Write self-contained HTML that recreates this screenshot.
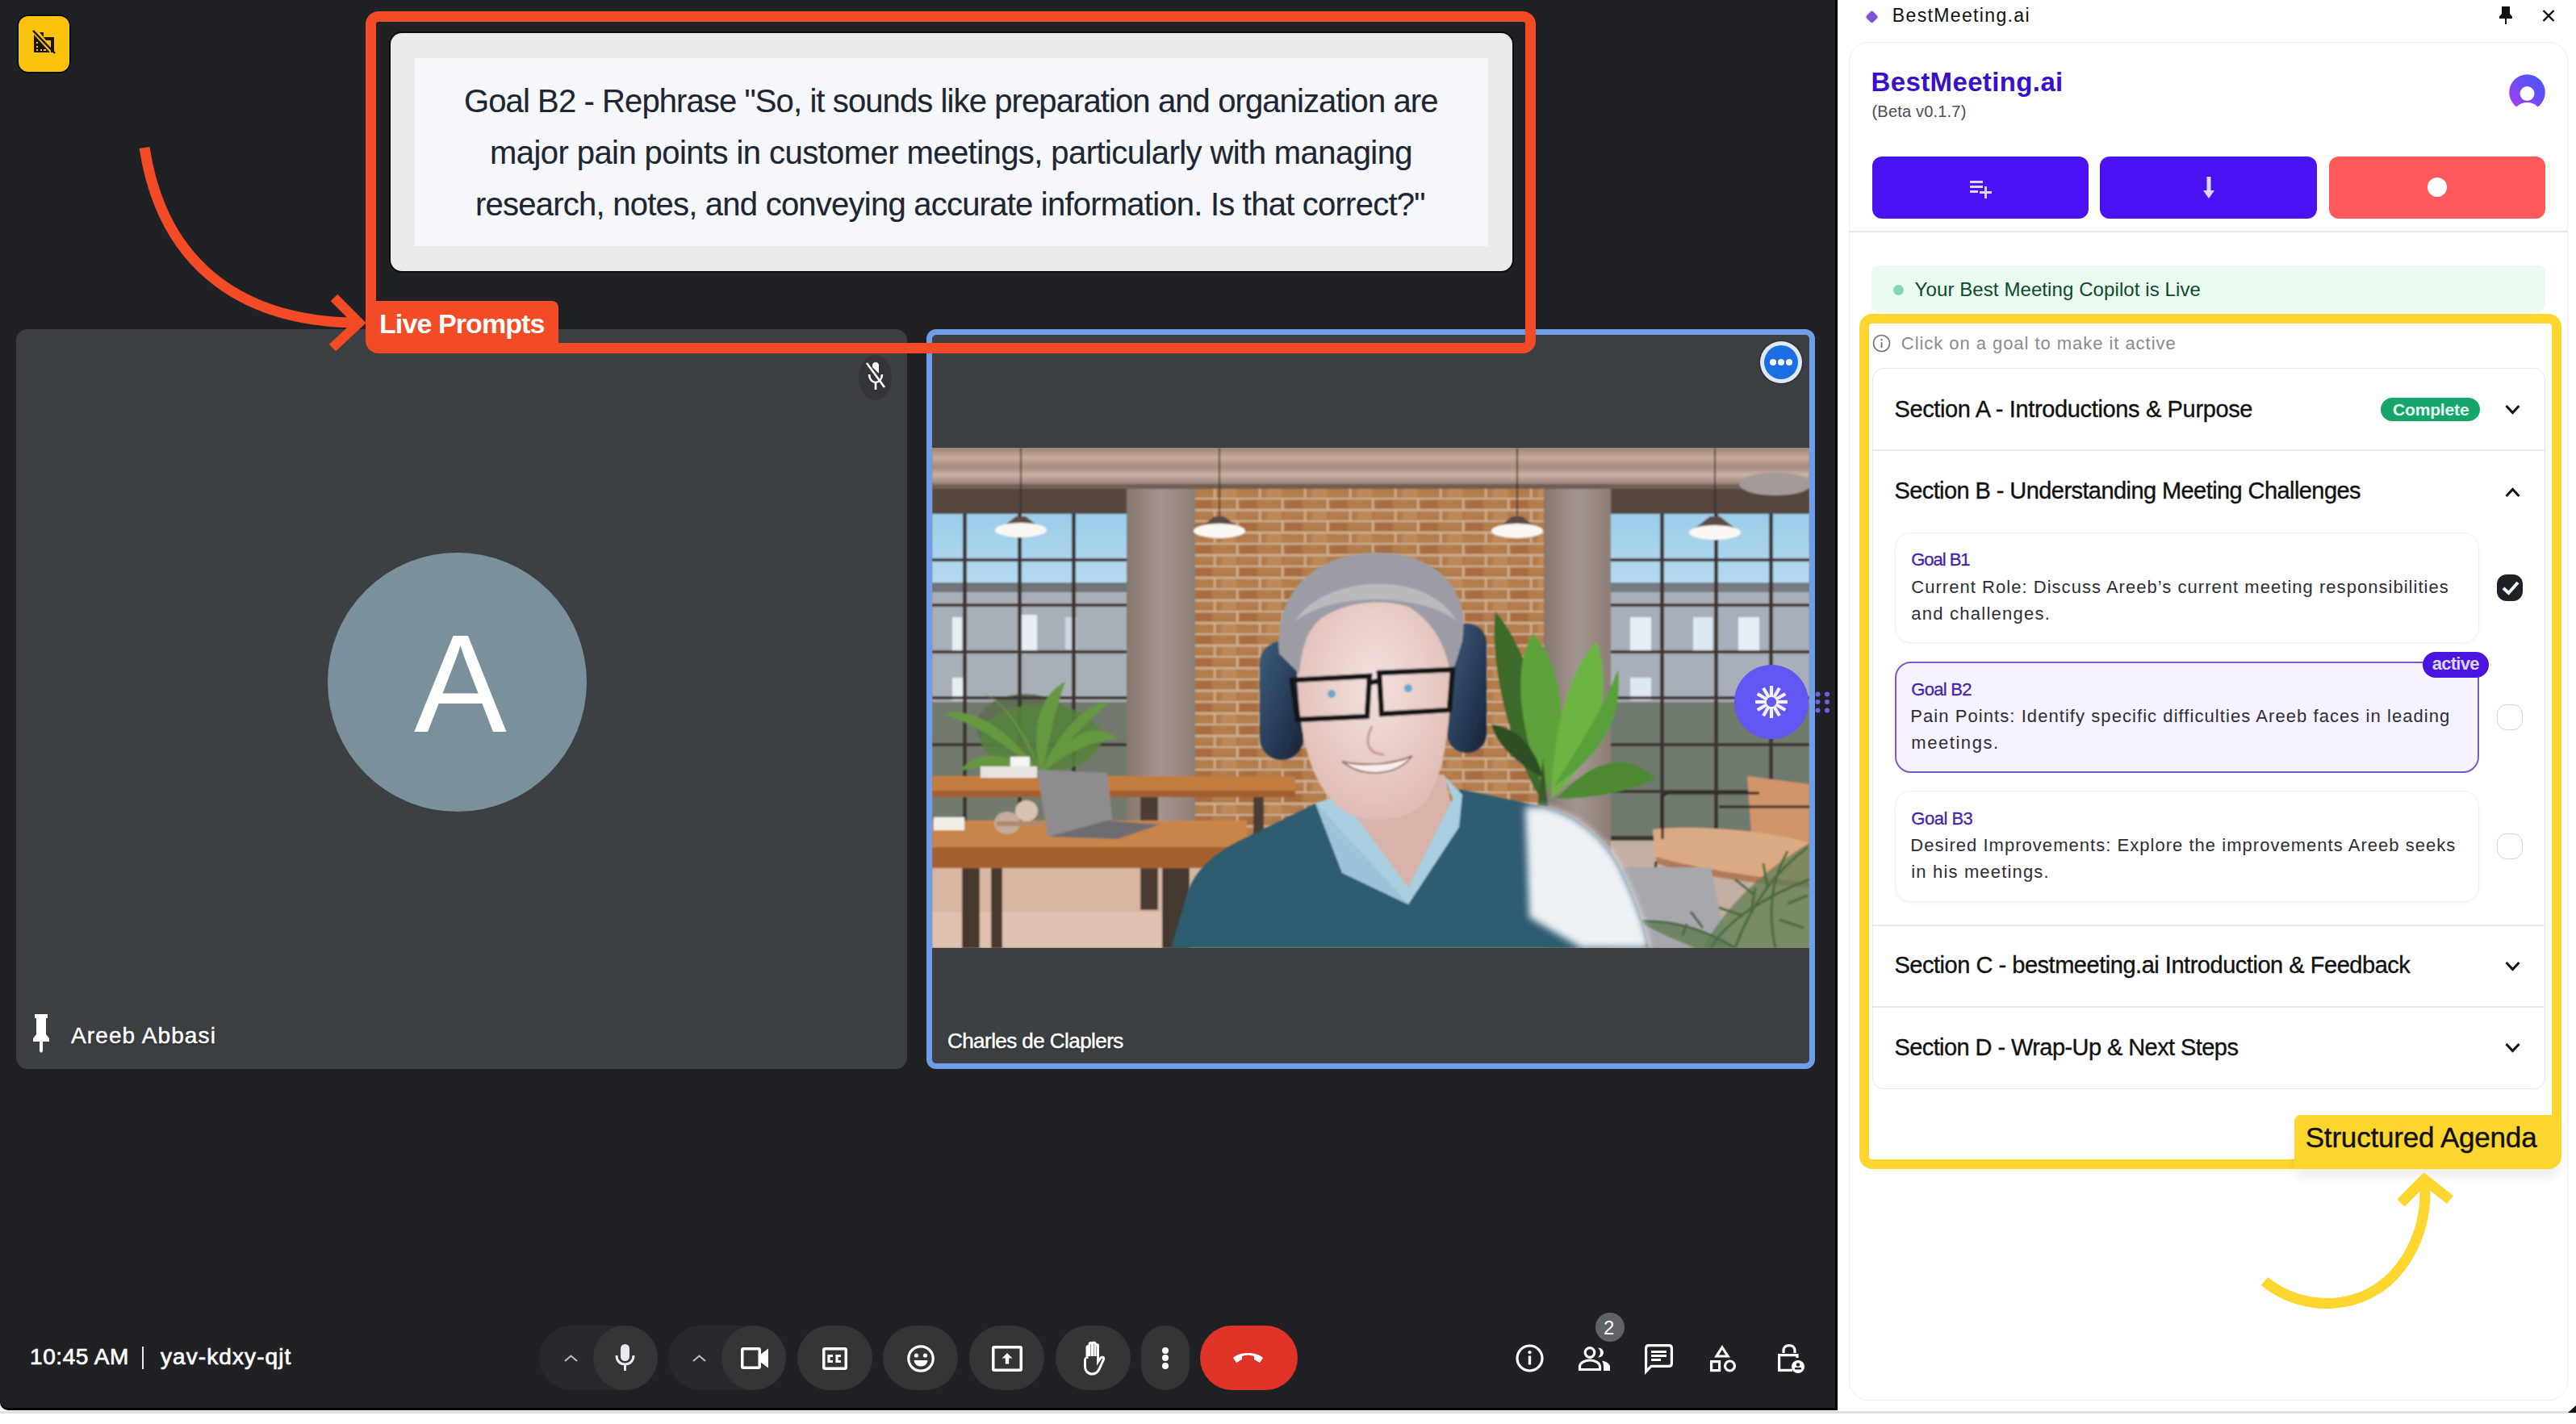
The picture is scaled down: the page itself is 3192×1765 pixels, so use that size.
<!DOCTYPE html>
<html><head><meta charset="utf-8">
<style>
*{box-sizing:border-box;margin:0;padding:0}
html,body{width:3192px;height:1765px;overflow:hidden;background:#fff;font-family:"Liberation Sans",sans-serif}
.a{position:absolute}
.t{position:absolute;white-space:nowrap;line-height:1}
svg{position:absolute;overflow:visible}
.ctl{position:absolute;background:#333537;border-radius:40px;height:80px;top:1643px}
.wt{color:#fff;text-shadow:0 1px 2px rgba(0,0,0,.5)}
</style></head><body>
<div class="a" style="left:0;top:1749px;width:3192px;height:3px;background:#dedfe1"></div>
<div class="a" style="left:0;top:0;width:2277px;height:1748px;background:#000;border-bottom-left-radius:10px"></div>
<div class="a" style="left:0;top:0;width:2274px;height:1745px;background:#202124;border-bottom-left-radius:10px;overflow:hidden">
  <!-- yellow icon -->
  <div class="a" style="left:23px;top:20px;width:63px;height:69px;background:#f8c20d;border-radius:12px;box-shadow:0 0 0 1.5px #000"></div>
  <svg style="left:40px;top:37px" width="29" height="30" viewBox="0 0 29 30">
    <path d="M2 6 L2 28 L22 28 Z" fill="#1a1406"/>
    <path d="M9 3 L14 3 L14 9 L27 9 L27 28 L23 28 L23 13 L17 13 Z" fill="#1a1406"/>
    <line x1="1" y1="1" x2="28" y2="29" stroke="#1a1406" stroke-width="2.5"/>
    <rect x="5" y="15" width="2" height="2" fill="#f8c20d"/><rect x="5" y="20" width="2" height="2" fill="#f8c20d"/><rect x="5" y="24" width="2" height="2" fill="#f8c20d"/><rect x="10" y="24" width="2" height="2" fill="#f8c20d"/><rect x="14" y="24" width="3" height="2" fill="#f8c20d"/>
  </svg>

  <!-- Areeb tile -->
  <div class="a" style="left:20px;top:408px;width:1104px;height:917px;background:#3c4043;border-radius:14px"></div>
  <div class="a" style="left:406px;top:685px;width:321px;height:321px;border-radius:50%;background:#7a909c"></div>
  <div class="t" style="left:513.0px;top:761.4px;font-size:172px;letter-spacing:0.0px;color:#fff">A</div>
  <div class="a" style="left:1064px;top:440px;width:41px;height:56px;border-radius:50%;background:#333538"></div>
  <svg style="left:1072px;top:447px" width="26" height="38" viewBox="0 0 26 38">
    <path d="M13 2 C16 2 17 4 17 6 L17 16 L9 8 L9 6 C9 4 10 2 13 2 Z" fill="#fff"/>
    <path d="M5 17 C5 23 9 27 13 27 C17 27 21 23 21 17" fill="none" stroke="#fff" stroke-width="2.6"/>
    <rect x="11.7" y="26" width="2.6" height="10" fill="#fff"/>
    <line x1="2" y1="3" x2="24" y2="33" stroke="#fff" stroke-width="2.6"/>
  </svg>
  <svg style="left:40px;top:1256px" width="22" height="48" viewBox="0 0 22 48">
    <path d="M3 1 H19 V6 H17 V26 L21 31 V35 H13 V47 L11 49 L9 47 V35 H1 V31 L5 26 V6 H3 Z" fill="#fff"/>
  </svg>
  <div class="t" style="left:88.0px;top:1270.1px;font-size:28px;letter-spacing:1.118px;color:#fff;-webkit-text-stroke:0.5px #fff;text-shadow:0 1px 3px rgba(0,0,0,.6)">Areeb Abbasi</div>

  <!-- Charles tile -->
  <div class="a" style="left:1148px;top:408px;width:1101px;height:917px;border:7px solid #6f9de8;border-radius:12px;background:#3c4043"></div>
  <div class="a" id="photo" style="left:1155px;top:555px;width:1087px;height:620px;background:#a08070;overflow:hidden">
<svg style="left:0;top:0" width="1087" height="620" viewBox="1155 555 1087 620">
<defs>
  <pattern id="brick" x="0" y="3" width="56" height="28" patternUnits="userSpaceOnUse">
    <rect width="56" height="28" fill="#b47b4c"/>
    <rect x="0" y="12" width="56" height="2.5" fill="#cdb49a"/>
    <rect x="0" y="26" width="56" height="2.5" fill="#cdb49a"/>
    <rect x="20" y="0" width="2.5" height="13" fill="#cdb49a"/>
    <rect x="48" y="14" width="2.5" height="13" fill="#cdb49a"/>
    <rect x="24" y="1" width="22" height="10" fill="#a86c40"/>
    <rect x="2" y="15" width="18" height="10" fill="#c08a58"/>
  </pattern>
  <linearGradient id="sky" x1="0" y1="0" x2="0" y2="1"><stop offset="0" stop-color="#9ccdea"/><stop offset="1" stop-color="#b6daee"/></linearGradient>
  <linearGradient id="pipe" x1="0" y1="0" x2="0" y2="1"><stop offset="0" stop-color="#9b8478"/><stop offset=".25" stop-color="#c9ab9c"/><stop offset=".5" stop-color="#a48c80"/><stop offset=".7" stop-color="#cdb2a4"/><stop offset="1" stop-color="#8c766c"/></linearGradient>
  <linearGradient id="col" x1="0" y1="0" x2="1" y2="0"><stop offset="0" stop-color="#85766e"/><stop offset=".5" stop-color="#a39690"/><stop offset="1" stop-color="#8c7d75"/></linearGradient>
  <linearGradient id="hp" x1="0" y1="0" x2="1" y2="1"><stop offset="0" stop-color="#3d5c7e"/><stop offset="1" stop-color="#172338"/></linearGradient>
  <radialGradient id="skin" cx=".5" cy=".4" r=".6"><stop offset="0" stop-color="#f3e0dd"/><stop offset="1" stop-color="#e0bdb6"/></radialGradient>
  <filter id="soft"><feGaussianBlur stdDeviation="1.2"/></filter>
  <filter id="soft3"><feGaussianBlur stdDeviation="4"/></filter>
</defs>
<g filter="url(#soft)">
  <!-- base -->
  <rect x="1155" y="555" width="1087" height="620" fill="#a98a78"/>
  <!-- brick wall -->
  <rect x="1481" y="600" width="432" height="480" fill="url(#brick)"/>
  <!-- left window -->
  <rect x="1155" y="597" width="241" height="40" fill="#54463e"/>
  <rect x="1155" y="637" width="241" height="90" fill="url(#sky)"/>
  <rect x="1155" y="725" width="241" height="145" fill="#a9afb7"/>
  <rect x="1155" y="722" width="241" height="12" fill="#6f747c"/>
  <rect x="1155" y="870" width="241" height="150" fill="#717a6c"/>
  <rect x="1180" y="765" width="12" height="45" fill="#e8eef4"/><rect x="1263" y="762" width="22" height="46" fill="#e8eef4"/><rect x="1320" y="765" width="14" height="40" fill="#cdd8e2"/>
  <rect x="1180" y="840" width="14" height="28" fill="#e8eef4"/>
  <ellipse cx="1270" cy="900" rx="60" ry="40" fill="#5e6e55"/>
  <g fill="#3d3430">
    <rect x="1193" y="637" width="5" height="385"/><rect x="1261" y="637" width="5" height="385"/><rect x="1328" y="637" width="5" height="385"/>
    <rect x="1155" y="692" width="241" height="4"/><rect x="1155" y="748" width="241" height="4"/><rect x="1155" y="806" width="241" height="4"/><rect x="1155" y="863" width="241" height="4"/><rect x="1155" y="921" width="241" height="4"/>
  </g>
  <!-- right window -->
  <rect x="1996" y="605" width="246" height="32" fill="#54463e"/>
  <rect x="1996" y="637" width="246" height="90" fill="url(#sky)"/>
  <rect x="1996" y="725" width="246" height="145" fill="#a9afb8"/>
  <rect x="1996" y="722" width="246" height="12" fill="#747a82"/>
  <rect x="1996" y="870" width="246" height="175" fill="#707a6e"/>
  <rect x="2020" y="765" width="26" height="42" fill="#e6eef6"/><rect x="2098" y="765" width="24" height="42" fill="#dde8f2"/><rect x="2154" y="765" width="26" height="42" fill="#e6eef6"/>
  <rect x="2020" y="840" width="26" height="28" fill="#dde8f2"/>
  <rect x="1996" y="1040" width="246" height="135" fill="#c3aea2"/>
  <g fill="#3d3430">
    <rect x="2057" y="637" width="5" height="405"/><rect x="2124" y="637" width="5" height="405"/><rect x="2192" y="637" width="5" height="405"/>
    <rect x="1996" y="692" width="246" height="4"/><rect x="1996" y="748" width="246" height="4"/><rect x="1996" y="806" width="246" height="4"/><rect x="1996" y="863" width="246" height="4"/><rect x="1996" y="921" width="246" height="4"/><rect x="1996" y="979" width="246" height="4"/><rect x="1996" y="1036" width="246" height="6"/>
  </g>
  <!-- columns -->
  <rect x="1396" y="597" width="85" height="480" fill="url(#col)"/>
  <rect x="1913" y="605" width="83" height="440" fill="url(#col)"/>
  <rect x="1913" y="1040" width="83" height="30" fill="#9a8a80"/>
  <!-- ceiling pipes -->
  <rect x="1155" y="555" width="1087" height="48" fill="url(#pipe)"/>
  <rect x="1155" y="600" width="1087" height="6" fill="#6f5e55"/>
  <ellipse cx="2200" cy="600" rx="45" ry="14" fill="#a49a98"/>
  <!-- lamp cords -->
  <g stroke="#2e2826" stroke-width="1.5"><line x1="1265" y1="555" x2="1265" y2="648"/><line x1="1511" y1="555" x2="1511" y2="648"/><line x1="1880" y1="555" x2="1880" y2="648"/><line x1="2125" y1="555" x2="2125" y2="648"/></g>
  <g fill="#5a4c45"><path d="M1259 640 L1271 640 L1290 655 L1240 655 Z"/><path d="M1505 640 L1517 640 L1536 655 L1486 655 Z"/><path d="M1874 640 L1886 640 L1905 655 L1855 655 Z"/><path d="M2119 640 L2131 640 L2150 655 L2100 655 Z"/></g>
  <g fill="#fbf8f4"><ellipse cx="1265" cy="657" rx="32" ry="9"/><ellipse cx="1511" cy="658" rx="32" ry="9"/><ellipse cx="1880" cy="658" rx="32" ry="9"/><ellipse cx="2125" cy="660" rx="32" ry="9"/></g>
  <!-- floor -->
  <rect x="1155" y="1076" width="760" height="99" fill="#d7b6a3"/>
  <rect x="1155" y="1130" width="300" height="45" fill="#dfc1b0"/>
  <!-- palm left -->
  <ellipse cx="1290" cy="915" rx="75" ry="42" fill="#58843c" opacity=".85"/>
  <g fill="#66983f">
    <path d="M1290 960 C1250 900 1200 875 1170 885 C1215 900 1255 930 1290 960 Z"/>
    <path d="M1290 960 C1275 900 1290 860 1320 845 C1305 885 1300 925 1290 960 Z"/>
    <path d="M1290 960 C1325 905 1355 895 1385 915 C1350 920 1315 935 1290 960 Z"/>
    <path d="M1290 960 C1245 930 1210 930 1190 955 C1230 948 1260 950 1290 960 Z"/>
    <path d="M1290 960 C1305 915 1345 870 1375 870 C1345 895 1318 925 1290 960 Z"/>
    <path d="M1290 960 C1265 905 1245 870 1215 858 C1250 870 1275 915 1290 960 Z"/>
  </g>
  <rect x="1252" y="938" width="24" height="22" fill="#f4f4f2"/>
  <!-- back table -->
  <rect x="1155" y="962" width="450" height="25" fill="#c27b40"/>
  <rect x="1155" y="980" width="450" height="8" fill="#a35f2d"/>
  <rect x="1413" y="988" width="22" height="140" fill="#4c3d35"/><rect x="1553" y="988" width="13" height="55" fill="#4c3d35"/>
  <rect x="1215" y="950" width="70" height="14" fill="#e9e4df"/>
  <!-- front table -->
  <rect x="1155" y="1017" width="390" height="42" fill="#c8844a"/>
  <rect x="1155" y="1050" width="390" height="26" fill="#a6612f"/>
  <g fill="#45372f"><rect x="1192" y="1076" width="22" height="99"/><rect x="1228" y="1076" width="14" height="99"/><rect x="1440" y="1076" width="34" height="99"/></g>
  <rect x="1157" y="1013" width="38" height="16" fill="#f2efe9"/>
  <!-- laptop -->
  <path d="M1285 954 L1372 958 L1380 1030 L1298 1037 Z" fill="#8e8b8f"/>
  <path d="M1372 1017 L1437 1022 L1385 1040 L1300 1037 Z" fill="#6f6d72"/>
  <ellipse cx="1248" cy="1020" rx="16" ry="14" fill="#c4ab9b"/><ellipse cx="1272" cy="1005" rx="14" ry="13" fill="#d8c2b1"/>
  <rect x="1235" y="1018" width="55" height="6" fill="#b08a70"/>
  <!-- right plant -->
  <g>
    <path d="M1912 995 C1870 930 1845 820 1853 758 C1890 800 1925 900 1912 995 Z" fill="#3c6a2c"/>
    <path d="M1915 985 C1880 900 1875 820 1900 785 C1940 830 1945 920 1915 985 Z" fill="#5da23a"/>
    <path d="M1922 990 C1925 900 1945 830 1978 795 C2000 860 1980 940 1922 990 Z" fill="#6cb443"/>
    <path d="M1925 975 C1960 920 1985 880 2005 830 C2010 880 1995 930 1925 975 Z" fill="#58a03a"/>
    <path d="M1912 965 C1880 945 1855 925 1848 898 C1880 900 1905 930 1912 965 Z" fill="#2e4f26"/>
    <path d="M1928 990 C1965 950 2010 925 2052 965 C2010 985 1965 990 1928 990 Z" fill="#4d8a33"/>
    <path d="M1905 1000 L1912 940 L1918 1000 Z" fill="#3a5a2a"/>
  </g>
  <!-- armchair -->
  <path d="M2165 962 L2242 972 L2242 1070 L2172 1062 Z" fill="#d2946a"/>
  <path d="M2048 1028 C2100 1022 2200 1030 2242 1045 L2242 1098 C2180 1092 2100 1082 2052 1068 Z" fill="#dcaa82"/>
  <path d="M2052 1062 C2100 1076 2180 1088 2242 1094 L2242 1100 C2180 1096 2100 1086 2052 1070 Z" fill="#b07a58"/>
  <g stroke="#2c2624" stroke-width="3" fill="none"><path d="M2060 1040 L2060 990 C2060 985 2065 983 2070 983 L2180 983"/><path d="M2052 1068 L2049 1100"/><path d="M2130 1000 L2242 1000"/></g>
  <path d="M2010 1075 L2120 1075 L2140 1175 L2005 1175 Z" fill="#a9a7ae"/>
  <path d="M2242 1045 C2190 1075 2140 1120 2110 1175 L2242 1175 Z" fill="#5f7d52" opacity=".75"/>
  <path d="M2150 1175 C2110 1150 2070 1138 2030 1142 C2060 1160 2090 1170 2100 1175 Z" fill="#5f7d52" opacity=".8"/>
  <g stroke="#4b6b40" stroke-width="3" fill="none">
    <path d="M2240 1050 C2200 1080 2170 1120 2150 1175"/>
    <path d="M2242 1090 C2190 1110 2140 1140 2120 1175"/>
    <path d="M2200 1175 C2190 1130 2195 1090 2215 1055"/>
    <path d="M2150 1175 C2110 1150 2070 1140 2030 1142"/>
    <path d="M2175 1110 L2150 1090 M2190 1100 L2185 1070 M2160 1135 L2130 1125 M2170 1130 L2175 1100 M2110 1150 L2095 1130 M2090 1145 L2085 1160 M2215 1120 L2240 1110 M2205 1140 L2235 1150"/>
  </g>
</g>
<!-- man -->
<g filter="url(#soft)">
  <!-- sweater -->
  <path d="M1451 1175 L1470 1110 C1480 1080 1500 1060 1540 1040 L1630 996 L1745 1121 L1808 978 L1913 1000 C1950 1008 1985 1035 2005 1070 C2025 1110 2040 1150 2043 1175 Z" fill="#2e5b70"/>
  <!-- highlight -->
  <path d="M1890 1000 L1913 1000 C1950 1008 1985 1035 2005 1070 C2025 1110 2040 1150 2043 1175 L1960 1175 L1895 1137 Z" fill="#eef2f6" filter="url(#soft3)"/>
  <!-- neck -->
  <path d="M1645 960 L1790 960 L1800 1005 L1745 1100 L1655 1030 Z" fill="#d9b3a9"/>
  <!-- collar -->
  <path d="M1630 996 L1660 985 L1745 1100 L1800 990 L1790 962 L1812 985 L1808 1025 L1745 1121 Z" fill="#a9cfe0"/>
  <path d="M1630 996 L1663 1082 L1745 1121 Z" fill="#9cc4d8"/>
  <!-- headphone cups -->
  <rect x="1561" y="795" width="54" height="147" rx="27" fill="url(#hp)"/>
  <rect x="1793" y="773" width="49" height="160" rx="24" fill="url(#hp)"/>
  <!-- face -->
  <path d="M1608 850 C1603 790 1640 742 1705 740 C1770 738 1802 788 1798 850 C1795 920 1786 975 1760 1000 C1740 1018 1690 1022 1665 1005 C1630 980 1612 930 1608 850 Z" fill="url(#skin)"/>
  <!-- hair -->
  <path d="M1585 810 C1578 725 1640 685 1705 685 C1785 685 1822 735 1812 795 L1798 840 C1793 800 1775 770 1745 752 C1705 740 1660 748 1632 770 C1618 785 1612 810 1610 835 Z" fill="#9d9da5"/>
  <path d="M1605 770 C1640 712 1770 705 1805 770 C1770 738 1655 730 1605 770 Z" fill="#b9b9c0"/>
  <!-- glasses -->
  <g fill="none" stroke="#141212" stroke-width="6.5">
    <path d="M1601 843 L1697 838 L1694 888 L1608 892 Z"/>
    <path d="M1709 834 L1800 830 L1796 880 L1712 885 Z"/>
    <line x1="1697" y1="846" x2="1709" y2="844"/>
  </g>
  <circle cx="1650" cy="860" r="5" fill="#6aa6d0"/><circle cx="1745" cy="853" r="5" fill="#6aa6d0"/>
  <!-- nose shadow, mouth -->
  <path d="M1700 900 C1690 920 1695 935 1715 935" fill="none" stroke="#c89a92" stroke-width="3"/>
  <path d="M1663 944 C1690 965 1730 962 1750 937 C1725 948 1690 950 1663 944 Z" fill="#f6eeea" stroke="#9a6b66" stroke-width="2"/>
</g>
</svg>

  </div>
  <div class="t" style="left:1174.0px;top:1277.0px;font-size:26px;letter-spacing:-0.556px;color:#fff;-webkit-text-stroke:0.5px #fff;text-shadow:0 1px 3px rgba(0,0,0,.6)">Charles de Claplers</div>
  <div class="a" style="left:2181px;top:423px;width:52px;height:52px;border-radius:50%;background:#dfe9fb;box-shadow:0 0 3px rgba(0,0,0,.6)"></div>
  <div class="a" style="left:2186px;top:428px;width:42px;height:42px;border-radius:50%;background:#1c6fe3"></div>
  <div class="a" style="left:2193px;top:445px;width:8px;height:8px;border-radius:50%;background:#fff"></div>
  <div class="a" style="left:2203px;top:445px;width:8px;height:8px;border-radius:50%;background:#fff"></div>
  <div class="a" style="left:2213px;top:445px;width:8px;height:8px;border-radius:50%;background:#fff"></div>

  <!-- floating bestmeeting button -->
  <div class="a" style="left:2149px;top:824px;width:92px;height:92px;border-radius:50%;background:#6257f3"></div>
  <svg style="left:2175px;top:850px" width="40" height="40" viewBox="-20 -20 40 40">
    <g stroke="#f4f2ff" stroke-width="4.2" stroke-linecap="butt">
      <line x1="0" y1="-20" x2="0" y2="-6"/><line x1="0" y1="20" x2="0" y2="6"/>
      <line x1="-20" y1="0" x2="-6" y2="0"/><line x1="20" y1="0" x2="6" y2="0"/>
      <line x1="10" y1="-17.3" x2="3" y2="-5.2"/><line x1="-10" y1="17.3" x2="-3" y2="5.2"/>
      <line x1="-10" y1="-17.3" x2="-3" y2="-5.2"/><line x1="10" y1="17.3" x2="3" y2="5.2"/>
      <line x1="17.3" y1="-10" x2="5.2" y2="-3"/><line x1="-17.3" y1="10" x2="-5.2" y2="3"/>
      <line x1="-17.3" y1="-10" x2="-5.2" y2="-3"/><line x1="17.3" y1="10" x2="5.2" y2="3"/>
    </g>
  </svg>
  <svg style="left:2249px;top:857px" width="20" height="28" viewBox="0 0 20 28">
    <g fill="#6e60e0"><circle cx="3.5" cy="3.5" r="3"/><circle cx="15" cy="3.5" r="3"/><circle cx="3.5" cy="13" r="3"/><circle cx="15" cy="13" r="3"/><circle cx="3.5" cy="23.5" r="3"/><circle cx="15" cy="23.5" r="3"/></g>
  </svg>

  <!-- live prompts overlay -->
  <div class="a" style="left:453px;top:14px;width:1450px;height:424px;border:13px solid #f24b25;border-radius:16px"></div>
  <div class="a" style="left:482px;top:39px;width:1394px;height:299px;background:#0c0c0e;border-radius:16px"></div>
  <div class="a" style="left:484px;top:41px;width:1390px;height:295px;background:#ebebeb;border-radius:14px"></div>
  <div class="a" style="left:514px;top:72px;width:1330px;height:233px;background:#f6f7fa"></div>
  <div class="t" style="left:575.0px;top:105.3px;font-size:40px;letter-spacing:-0.9px;color:#1f2633;-webkit-text-stroke:0.15px #1f2633">Goal B2 - Rephrase "So, it sounds like preparation and organization are</div>
  <div class="t" style="left:607.0px;top:168.5px;font-size:40px;letter-spacing:-0.569px;color:#1f2633;-webkit-text-stroke:0.15px #1f2633">major pain points in customer meetings, particularly with managing</div>
  <div class="t" style="left:589.0px;top:233.1px;font-size:40px;letter-spacing:-0.768px;color:#1f2633;-webkit-text-stroke:0.15px #1f2633">research, notes, and conveying accurate information. Is that correct?"</div>
  <div class="a" style="left:453px;top:373px;width:239px;height:58px;background:#f24b25;border-radius:0 8px 0 14px"></div>
  <div class="t" style="left:470.0px;top:384.4px;font-size:34px;letter-spacing:-0.909px;font-weight:700;color:#fff">Live Prompts</div>
  <svg style="left:0;top:0" width="500" height="450" viewBox="0 0 500 450">
    <path d="M179 183 C 200 320 290 398 440 400" fill="none" stroke="#f24b25" stroke-width="13"/>
    <path d="M414 369 L445 400 L412 431" fill="none" stroke="#f24b25" stroke-width="12"/>
  </svg>

  <!-- bottom bar -->
  <div class="t" style="left:37.0px;top:1668.3px;font-size:28px;letter-spacing:0.571px;color:#fff;-webkit-text-stroke:0.7px #fff">10:45 AM</div>
  <div class="a" style="left:176px;top:1669px;width:2px;height:28px;background:#e8e8e8"></div>
  <div class="t" style="left:199.0px;top:1668.3px;font-size:28px;letter-spacing:1.091px;color:#fff;-webkit-text-stroke:0.7px #fff">yav-kdxy-qjt</div>

  <div class="ctl" style="left:668px;width:147px;background:#28292c"></div>
  <div class="ctl" style="left:735px;width:80px;"></div>
  <div class="ctl" style="left:828px;width:146px;background:#28292c"></div>
  <div class="ctl" style="left:894px;width:80px;"></div>
  <div class="ctl" style="left:988px;width:93px;"></div>
  <div class="ctl" style="left:1094px;width:93px;"></div>
  <div class="ctl" style="left:1201px;width:93px;"></div>
  <div class="ctl" style="left:1308px;width:93px;"></div>
  <div class="ctl" style="left:1414px;width:60px;"></div>
  <div class="ctl" style="left:1487px;width:121px;background:#df3328"></div>
  <!-- chevrons -->
  <svg style="left:699px;top:1679px" width="17" height="9" viewBox="0 0 17 9"><path d="M1 8 L8.5 1.5 L16 8" fill="none" stroke="#bdc1c6" stroke-width="2"/></svg>
  <svg style="left:858px;top:1679px" width="17" height="9" viewBox="0 0 17 9"><path d="M1 8 L8.5 1.5 L16 8" fill="none" stroke="#bdc1c6" stroke-width="2"/></svg>
  <!-- mic -->
  <svg style="left:762px;top:1666px" width="25" height="33" viewBox="0 0 25 33">
    <rect x="7" y="0" width="11" height="21" rx="5.5" fill="#e8eaed"/>
    <path d="M2 14 C2 21 6.5 25 12.5 25 C18.5 25 23 21 23 14" fill="none" stroke="#e8eaed" stroke-width="3"/>
    <rect x="11" y="24" width="3" height="9" fill="#e8eaed"/>
  </svg>
  <!-- cam -->
  <svg style="left:918px;top:1670px" width="34" height="27" viewBox="0 0 34 27">
    <rect x="1.75" y="1.75" width="21.5" height="23.5" rx="1.5" fill="none" stroke="#fff" stroke-width="3.5"/>
    <path d="M24 9 L34 1.5 V25.5 L24 18 Z" fill="#fff"/>
  </svg>
  <!-- cc -->
  <svg style="left:1019px;top:1670px" width="31" height="28" viewBox="0 0 31 28">
    <rect x="1.75" y="1.75" width="27.5" height="24.5" rx="1.5" fill="none" stroke="#fff" stroke-width="3.5"/>
    <path d="M13 10.5 H8 V17.5 H13" fill="none" stroke="#fff" stroke-width="3.2"/>
    <path d="M23 10.5 H18 V17.5 H23" fill="none" stroke="#fff" stroke-width="3.2"/>
  </svg>
  <!-- emoji -->
  <svg style="left:1124px;top:1667px" width="34" height="34" viewBox="0 0 34 34">
    <circle cx="17" cy="17" r="15.2" fill="none" stroke="#fff" stroke-width="3.2"/>
    <circle cx="11.5" cy="13" r="2.6" fill="#fff"/><circle cx="22.5" cy="13" r="2.6" fill="#fff"/>
    <path d="M8.5 19 H25.5 C25 24 21.5 26.5 17 26.5 C12.5 26.5 9 24 8.5 19 Z" fill="#fff"/>
  </svg>
  <!-- present -->
  <svg style="left:1229px;top:1668px" width="38" height="32" viewBox="0 0 38 32">
    <rect x="1.75" y="1.75" width="34.5" height="28.5" rx="1" fill="none" stroke="#fff" stroke-width="3.5"/>
    <path d="M19 9 L12.5 15.5 H16.8 V22.5 H21.2 V15.5 H25.5 Z" fill="#fff"/>
  </svg>
  <!-- hand -->
  <svg style="left:1338px;top:1662px" width="34" height="43" viewBox="0 0 34 43">
    <path d="M9 22 V8 C9 6 12 6 12 8 V19 M12 19 V4 C12 2 15.5 2 15.5 4 V19 M15.5 19 V3.5 C15.5 1.5 19 1.5 19 3.5 V19 M19 19 V6 C19 4 22.5 4 22.5 6 V26 L26 21 C27.5 19 30.5 20.5 29.5 23 L24 35 C22 39 19 41 15 41 C10 41 6.5 37 6.5 32 V24 C6.5 21 9 21 9 22" fill="none" stroke="#fff" stroke-width="3"/>
    <path d="M9 24 H22 V32 C22 36 19 38 15.5 38 C11.5 38 9 35.5 9 32 Z" fill="#202124" opacity=".0"/>
  </svg>
  <!-- more -->
  <div class="a" style="left:1440px;top:1670px;width:8px;height:8px;border-radius:50%;background:#fff"></div>
  <div class="a" style="left:1440px;top:1679px;width:8px;height:8px;border-radius:50%;background:#fff"></div>
  <div class="a" style="left:1440px;top:1689px;width:8px;height:8px;border-radius:50%;background:#fff"></div>
  <!-- end call -->
  <svg style="left:1526px;top:1675px" width="41" height="18" viewBox="0 0 41 18">
    <path d="M2 8 C10 0 31 0 39 8 L35 14 L28 10 V6 C23 4 18 4 13 6 V10 L6 14 Z" fill="#fff"/>
  </svg>

  <!-- right icons -->
  <svg style="left:1878px;top:1666px" width="35" height="35" viewBox="0 0 35 35">
    <circle cx="17.5" cy="17.5" r="15.5" fill="none" stroke="#fff" stroke-width="3.2"/>
    <rect x="15.8" y="14.5" width="3.4" height="11" fill="#fff"/><circle cx="17.5" cy="10.2" r="2.1" fill="#fff"/>
  </svg>
  <svg style="left:1956px;top:1669px" width="40" height="30" viewBox="0 0 40 30">
    <circle cx="14" cy="7.5" r="5.8" fill="none" stroke="#fff" stroke-width="3.2"/>
    <path d="M1.5 28.5 V25 C1.5 20 8 17 14 17 C20 17 26.5 20 26.5 25 V28.5 Z" fill="none" stroke="#fff" stroke-width="3.2"/>
    <path d="M24 1.5 C28.5 1.5 31 4.5 31 7.5 C31 10.5 28.5 13.5 24 13.5 C25.8 12 27 10 27 7.5 C27 5 25.8 3 24 1.5 Z" fill="#fff"/>
    <path d="M29 17.5 C34 18.5 39 21 39 25 V30 H31 V25 C31 22 30.5 19.5 29 17.5 Z" fill="#fff"/>
  </svg>
  <svg style="left:2038px;top:1666px" width="35" height="36" viewBox="0 0 35 36">
    <path d="M1.6 34 V5 C1.6 3 3 1.6 5 1.6 H30 C32 1.6 33.4 3 33.4 5 V24 C33.4 26 32 27.4 30 27.4 H8 Z" fill="none" stroke="#fff" stroke-width="3.2"/>
    <rect x="8" y="8" width="19" height="3" fill="#fff"/><rect x="8" y="13" width="19" height="3" fill="#fff"/><rect x="8" y="18" width="12" height="3" fill="#fff"/>
  </svg>
  <svg style="left:2119px;top:1667px" width="33" height="34" viewBox="0 0 33 34">
    <path d="M15 3 L22 14 H8 Z" fill="none" stroke="#fff" stroke-width="3.2" stroke-linejoin="miter"/>
    <rect x="1.6" y="20.6" width="10" height="11" fill="none" stroke="#fff" stroke-width="3.2"/>
    <circle cx="24.5" cy="26" r="6" fill="none" stroke="#fff" stroke-width="3.2"/>
  </svg>
  <svg style="left:2201px;top:1666px" width="36" height="38" viewBox="0 0 36 38">
    <path d="M9 11 V8 C9 4 12 1.6 16 1.6 C20 1.6 23 4 23 8 V11" fill="none" stroke="#fff" stroke-width="3.2"/>
    <path d="M20 32.4 H3.6 V13.6 H26 V17" fill="none" stroke="#fff" stroke-width="3.2"/>
    <circle cx="27" cy="28" r="8" fill="#fff"/>
    <circle cx="27" cy="25.5" r="2.3" fill="#202124"/><rect x="23" y="29" width="8" height="2.6" rx="1" fill="#202124"/>
  </svg>
  <div class="a" style="left:1977px;top:1627px;width:36px;height:36px;border-radius:50%;background:#5f6368"></div>
  <div class="t" style="left:1987.0px;top:1633.7px;font-size:24px;letter-spacing:0.0px;color:#fff">2</div>

</div>

<!-- right panel -->
<svg style="left:2306px;top:7px" width="27" height="28" viewBox="0 0 27 28">
  <rect x="6" y="6.5" width="15" height="15" rx="3.5" transform="rotate(45 13.5 14)" fill="#f3eefc"/>
  <rect x="7.8" y="8.3" width="11.4" height="11.4" rx="2.5" transform="rotate(45 13.5 14)" fill="#7d52d8"/>
</svg>
<div class="t" style="left:2344.8px;top:7.9px;font-size:23px;letter-spacing:1.354px;color:#111">BestMeeting.ai</div>
<svg style="left:3096px;top:7px" width="18" height="24" viewBox="0 0 18 24">
  <path d="M4 1 H14 V10 L17 13.5 V16 H10 V23 H8 V16 H1 V13.5 L4 10 Z" fill="#111"/>
</svg>
<svg style="left:3150px;top:12px" width="16" height="15" viewBox="0 0 16 15">
  <path d="M1.5 1 L14.5 14 M14.5 1 L1.5 14" stroke="#111" stroke-width="2.4"/>
</svg>

<div class="a" style="left:2291px;top:52px;width:891px;height:1684px;border:1.5px solid #eceef2;border-radius:24px;background:#fff"></div>
<div class="t" style="left:2318.5px;top:85.1px;font-size:33px;letter-spacing:0.377px;font-weight:700;color:#3a11c9">BestMeeting.ai</div>
<div class="t" style="left:2319.5px;top:128.1px;font-size:20px;letter-spacing:0.192px;color:#4b4c55">(Beta v0.1.7)</div>
<svg style="left:3108px;top:92px" width="47" height="47" viewBox="0 0 47 47">
  <defs><linearGradient id="avg" x1="0" y1="1" x2="1" y2="0"><stop offset="0" stop-color="#b13ef0"/><stop offset=".55" stop-color="#6a4cf6"/><stop offset="1" stop-color="#3f5af5"/></linearGradient>
  <mask id="avm"><rect width="47" height="47" fill="#fff"/><circle cx="23.5" cy="24" r="9" fill="#000"/><ellipse cx="23.5" cy="52" rx="18" ry="17" fill="#000"/></mask></defs>
  <circle cx="23.5" cy="22.5" r="22.3" fill="url(#avg)" mask="url(#avm)"/>
</svg>

<div class="a" style="left:2320px;top:194px;width:268px;height:77px;border-radius:12px;background:#4a11f2"></div>
<div class="a" style="left:2602px;top:194px;width:269px;height:77px;border-radius:12px;background:#4a11f2"></div>
<div class="a" style="left:2886px;top:194px;width:268px;height:77px;border-radius:12px;background:#fe5a5e"></div>
<svg style="left:2440px;top:222px" width="30" height="24" viewBox="0 0 30 24">
  <rect x="1" y="2" width="16" height="3" fill="#dcd5ff"/><rect x="1" y="8" width="16" height="3" fill="#dcd5ff"/><rect x="1" y="14" width="10" height="3" fill="#dcd5ff"/>
  <rect x="19" y="9" width="3" height="15" fill="#dcd5ff"/><rect x="13" y="15" width="15" height="3" fill="#dcd5ff"/>
</svg>
<svg style="left:2729px;top:218px" width="16" height="30" viewBox="0 0 16 30">
  <rect x="5.5" y="1" width="5" height="20" fill="#dcd5ff"/><path d="M1 18 L8 28 L15 18 Z" fill="#dcd5ff"/>
</svg>
<div class="a" style="left:3008px;top:220px;width:24px;height:24px;border-radius:50%;background:#fff"></div>

<div class="a" style="left:2291px;top:286px;width:891px;height:2px;background:#e4e6ea"></div>

<div class="a" style="left:2319px;top:329px;width:835px;height:57px;border-radius:8px;background:#ebfbf2"></div>
<div class="a" style="left:2346px;top:353px;width:13px;height:13px;border-radius:50%;background:#84d7b5"></div>
<div class="t" style="left:2372.6px;top:347.0px;font-size:24px;letter-spacing:0.094px;color:#0b4a2c">Your Best Meeting Copilot is Live</div>

<div class="a" style="left:2304px;top:389px;width:870px;height:1060px;border:12.5px solid #fdd630;border-radius:16px"></div>
<svg style="left:2320px;top:414px" width="23" height="23" viewBox="0 0 23 23">
  <circle cx="11.5" cy="11.5" r="10" fill="none" stroke="#777" stroke-width="1.6"/>
  <rect x="10.6" y="10" width="1.8" height="7" fill="#777"/><circle cx="11.5" cy="7" r="1.2" fill="#777"/>
</svg>
<div class="t" style="left:2355.8px;top:414.8px;font-size:22px;letter-spacing:0.953px;color:#8b8b8f">Click on a goal to make it active</div>

<div class="a" style="left:2320px;top:456px;width:834px;height:894px;border:1.5px solid #e6e7ea;border-radius:14px"></div>
<div class="a" style="left:2321px;top:557px;width:832px;height:2px;background:#e8e9ec"></div>
<div class="a" style="left:2321px;top:1146px;width:832px;height:2px;background:#e8e9ec"></div>
<div class="a" style="left:2321px;top:1247px;width:832px;height:2px;background:#e8e9ec"></div>

<div class="t" style="left:2347.4px;top:492.8px;font-size:29px;letter-spacing:-0.356px;color:#111;-webkit-text-stroke:0.35px #111">Section A - Introductions &amp; Purpose</div>
<div class="a" style="left:2950px;top:493px;width:123px;height:29px;border-radius:15px;background:#16a56b"></div>
<div class="t" style="left:2964.9px;top:497.0px;font-size:21px;letter-spacing:-0.129px;font-weight:700;color:#e6fff5">Complete</div>
<svg style="left:3104px;top:501px" width="19" height="13" viewBox="0 0 19 13"><path d="M1.5 2 L9.5 10.5 L17.5 2" fill="none" stroke="#111" stroke-width="3"/></svg>
<div class="t" style="left:2347.4px;top:594.3px;font-size:29px;letter-spacing:-0.577px;color:#111;-webkit-text-stroke:0.35px #111">Section B - Understanding Meeting Challenges</div>
<svg style="left:3104px;top:604px" width="19" height="13" viewBox="0 0 19 13"><path d="M1.5 11 L9.5 2.5 L17.5 11" fill="none" stroke="#111" stroke-width="3"/></svg>

<div class="a" style="left:2348px;top:660px;width:724px;height:137px;border:1.5px solid #eef0f2;border-radius:20px;background:#fff;box-shadow:0 2px 4px rgba(0,0,0,.04)"></div>
<div class="t" style="left:2368.3px;top:683.4px;font-size:22px;letter-spacing:-1.05px;color:#4524a8;-webkit-text-stroke:0.3px #4524a8">Goal B1</div>
<div class="t" style="left:2368.3px;top:716.6px;font-size:22px;letter-spacing:1.034px;color:#2e2e33">Current Role: Discuss Areeb’s current meeting responsibilities</div>
<div class="t" style="left:2368.3px;top:749.9px;font-size:22px;letter-spacing:1.25px;color:#2e2e33">and challenges.</div>
<div class="a" style="left:3094px;top:712px;width:32px;height:33px;border-radius:12px;background:#1e2227"></div>
<svg style="left:3100px;top:719px" width="22" height="20" viewBox="0 0 22 20"><path d="M2 10 L8.5 16 L20 3" fill="none" stroke="#fff" stroke-width="4"/></svg>

<div class="a" style="left:2348px;top:820px;width:724px;height:138px;border:2px solid #7a5ac8;border-radius:20px;background:#f6f2ff"></div>
<div class="a" style="left:3002px;top:808px;width:82px;height:32px;border-radius:16px;background:#4a14e0"></div>
<div class="t" style="left:3013.7px;top:811.9px;font-size:22px;letter-spacing:-0.74px;font-weight:700;color:#ddd5ff">active</div>
<div class="t" style="left:2368.3px;top:843.7px;font-size:22px;letter-spacing:-0.733px;color:#4524a8;-webkit-text-stroke:0.3px #4524a8">Goal B2</div>
<div class="t" style="left:2367.3px;top:877.1px;font-size:22px;letter-spacing:1.065px;color:#2e2e33">Pain Points: Identify specific difficulties Areeb faces in leading</div>
<div class="t" style="left:2368.3px;top:910.4px;font-size:22px;letter-spacing:1.55px;color:#2e2e33">meetings.</div>
<div class="a" style="left:3094px;top:873px;width:32px;height:32px;border-radius:12px;border:1.5px solid #d4d4d8;background:#fff"></div>

<div class="a" style="left:2348px;top:980px;width:724px;height:138px;border:1.5px solid #eef0f2;border-radius:20px;background:#fff;box-shadow:0 2px 4px rgba(0,0,0,.04)"></div>
<div class="t" style="left:2368.3px;top:1003.7px;font-size:22px;letter-spacing:-0.5px;color:#4524a8;-webkit-text-stroke:0.3px #4524a8">Goal B3</div>
<div class="t" style="left:2367.3px;top:1037.1px;font-size:22px;letter-spacing:1.03px;color:#2e2e33">Desired Improvements: Explore the improvements Areeb seeks</div>
<div class="t" style="left:2368.3px;top:1070.4px;font-size:22px;letter-spacing:1.16px;color:#2e2e33">in his meetings.</div>
<div class="a" style="left:3094px;top:1033px;width:32px;height:32px;border-radius:12px;border:1.5px solid #d4d4d8;background:#fff"></div>

<div class="t" style="left:2347.4px;top:1182.4px;font-size:29px;letter-spacing:-0.471px;color:#111;-webkit-text-stroke:0.35px #111">Section C - bestmeeting.ai Introduction &amp; Feedback</div>
<svg style="left:3104px;top:1191px" width="19" height="13" viewBox="0 0 19 13"><path d="M1.5 2 L9.5 10.5 L17.5 2" fill="none" stroke="#111" stroke-width="3"/></svg>
<div class="t" style="left:2347.4px;top:1283.7px;font-size:29px;letter-spacing:-0.574px;color:#111;-webkit-text-stroke:0.35px #111">Section D - Wrap-Up &amp; Next Steps</div>
<svg style="left:3104px;top:1292px" width="19" height="13" viewBox="0 0 19 13"><path d="M1.5 2 L9.5 10.5 L17.5 2" fill="none" stroke="#111" stroke-width="3"/></svg>

<div class="a" style="left:2843px;top:1382px;width:331px;height:67px;border-radius:8px 0 16px 0;box-shadow:0 10px 14px rgba(0,0,0,.07)"></div>
<div class="a" style="left:2843px;top:1382px;width:320px;height:62px;border-radius:8px 0 0 0;background:#fdd630"></div>
<div class="t" style="left:2856.7px;top:1392.1px;font-size:35px;letter-spacing:-0.188px;color:#111;-webkit-text-stroke:0.4px #111">Structured Agenda</div>
<svg style="left:2790px;top:1440px" width="260" height="200" viewBox="2790 1440 260 200">
  <path d="M2806 1588 C 2850 1625 2930 1630 2975 1570 C 2998 1540 3008 1500 3004 1465" fill="none" stroke="#fdd630" stroke-width="13"/>
  <path d="M2975 1491 L3004 1462 L3036 1487" fill="none" stroke="#fdd630" stroke-width="13"/>
</svg>
<svg style="left:3180px;top:1740px" width="12" height="12" viewBox="0 0 12 12"><path d="M12 2 L12 11 L2 11 Z" fill="#111"/></svg>

</body></html>
